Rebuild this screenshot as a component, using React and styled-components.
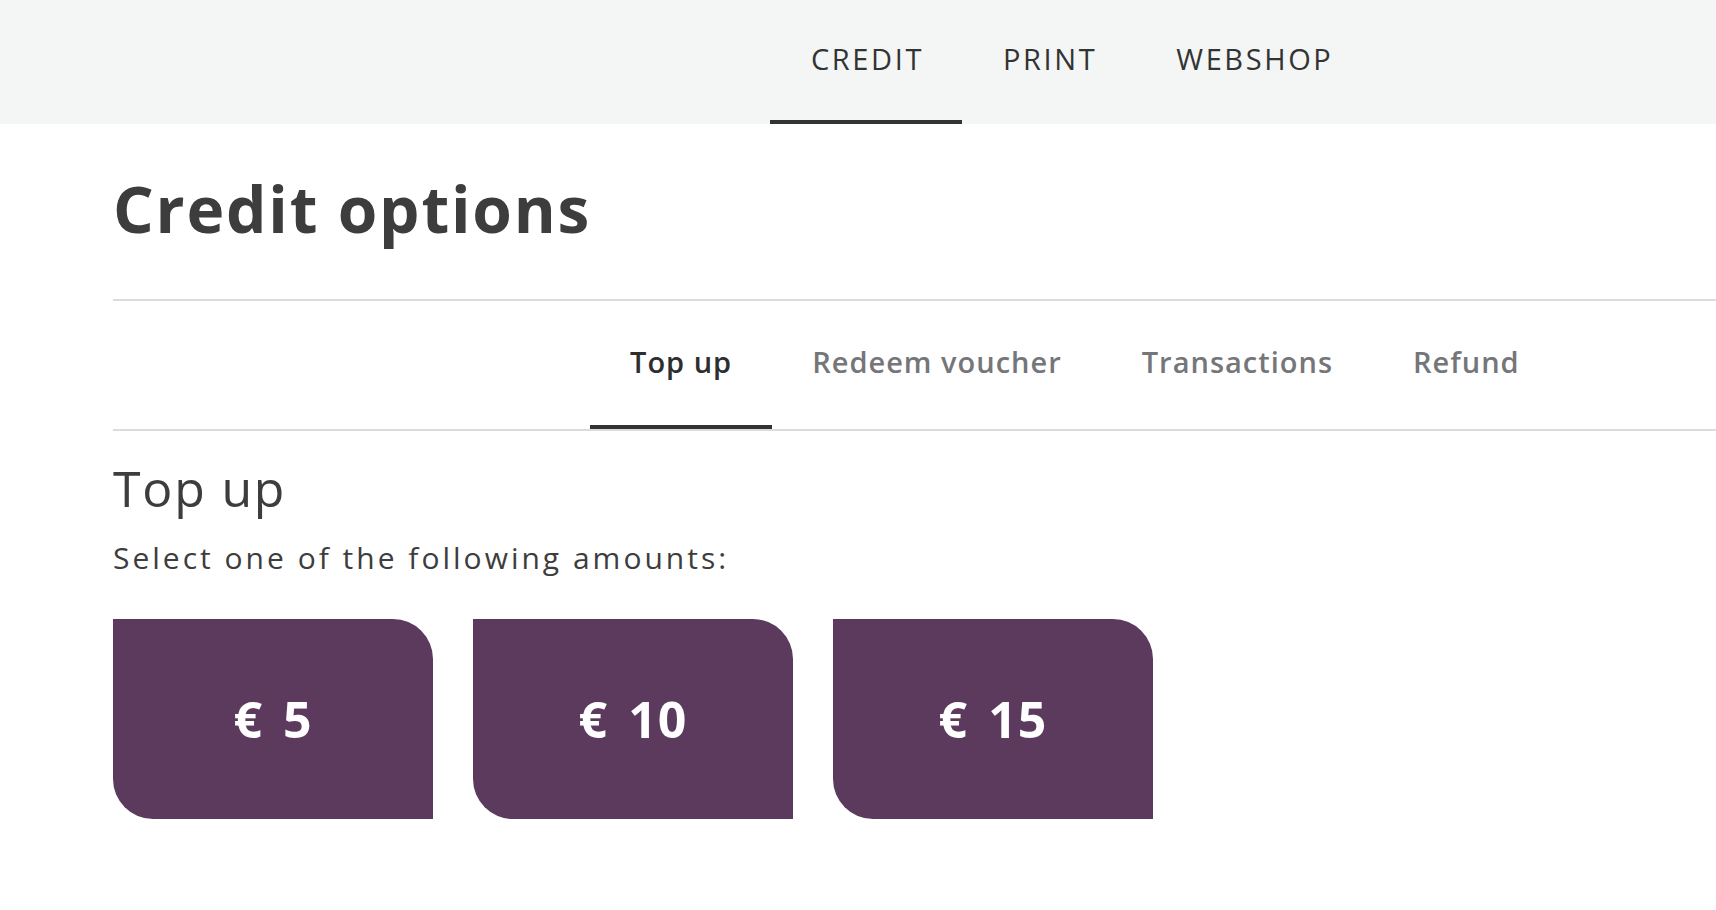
import React from "react";
import styled, { createGlobalStyle } from "styled-components";

const FONT = `"Open Sans", "Noto Sans", sans-serif`;

const Global = createGlobalStyle`
  html, body { margin: 0; padding: 0; background: #ffffff; }
  body { font-family: ${FONT}; color: #3d3d3d; }
  * { box-sizing: border-box; }
`;

const TopBar = styled.header`
  height: 124px;
  background: #f4f6f5;
  display: flex;
  align-items: stretch;
  padding-left: 770px;
`;

const NavItem = styled.a`
  display: flex;
  align-items: center;
  padding: 0 38px 2px 41px;
  font-size: 29px;
  line-height: 1.2;
  font-weight: 400;
  letter-spacing: 2.6px;
  color: #333333;
  text-decoration: none;
  border-bottom: 4px solid ${(p) => (p.$active ? "#333333" : "transparent")};
  cursor: pointer;
`;

const Main = styled.main`
  padding-left: 113px;
`;

const Title = styled.h1`
  margin: 47px 0 0;
  font-size: 64px;
  line-height: 1.2;
  font-weight: 700;
  letter-spacing: 1.8px;
  color: #3d3d3d;
  padding-bottom: 51px;
  border-bottom: 2px solid #dcdcdc;
`;

const Tabs = styled.nav`
  display: flex;
  padding-left: 477px;
  height: 130px;
  border-bottom: 2px solid #dcdcdc;
`;

const Tab = styled.a`
  display: flex;
  align-items: center;
  padding: 0 40px;
  font-size: 29px;
  line-height: 1.2;
  font-weight: 600;
  letter-spacing: 1px;
  color: ${(p) => (p.$active ? "#2e2e2e" : "#75767a")};
  text-decoration: none;
  border-bottom: 4px solid ${(p) => (p.$active ? "#333333" : "transparent")};
  cursor: pointer;
`;

const Section = styled.section`
  padding-top: 27px;
`;

const SubTitle = styled.h2`
  margin: 0;
  font-size: 50px;
  line-height: 1.2;
  font-weight: 400;
  letter-spacing: 1.8px;
  color: #3d3d3d;
`;

const Lead = styled.p`
  margin: 22px 0 0;
  font-size: 30px;
  line-height: 1.2;
  letter-spacing: 3px;
  color: #3d3d3d;
`;

const Amounts = styled.div`
  display: flex;
  gap: 40px;
  margin-top: 43px;
`;

const AmountButton = styled.button`
  width: 320px;
  height: 200px;
  border: none;
  padding: 0;
  background: #5c3a5e;
  color: #ffffff;
  border-radius: 0 40px 0 40px;
  font-family: ${FONT};
  font-size: 50px;
  line-height: 1;
  font-weight: 700;
  letter-spacing: 1px;
  display: flex;
  align-items: center;
  justify-content: center;
  gap: 20px;
  cursor: pointer;
`;

const navItems = ["CREDIT", "PRINT", "WEBSHOP"];
const tabs = ["Top up", "Redeem voucher", "Transactions", "Refund"];
const amounts = [5, 10, 15];

export default function App() {
  return (
    <>
      <Global />
      <TopBar>
        {navItems.map((n, i) => (
          <NavItem key={n} $active={i === 0}>
            {n}
          </NavItem>
        ))}
      </TopBar>
      <Main>
        <Title>Credit options</Title>
        <Tabs>
          {tabs.map((t, i) => (
            <Tab key={t} $active={i === 0}>
              {t}
            </Tab>
          ))}
        </Tabs>
        <Section>
          <SubTitle>Top up</SubTitle>
          <Lead>Select one of the following amounts:</Lead>
          <Amounts>
            {amounts.map((a) => (
              <AmountButton key={a}>
                <span>€</span>
                <span>{a}</span>
              </AmountButton>
            ))}
          </Amounts>
        </Section>
      </Main>
    </>
  );
}
